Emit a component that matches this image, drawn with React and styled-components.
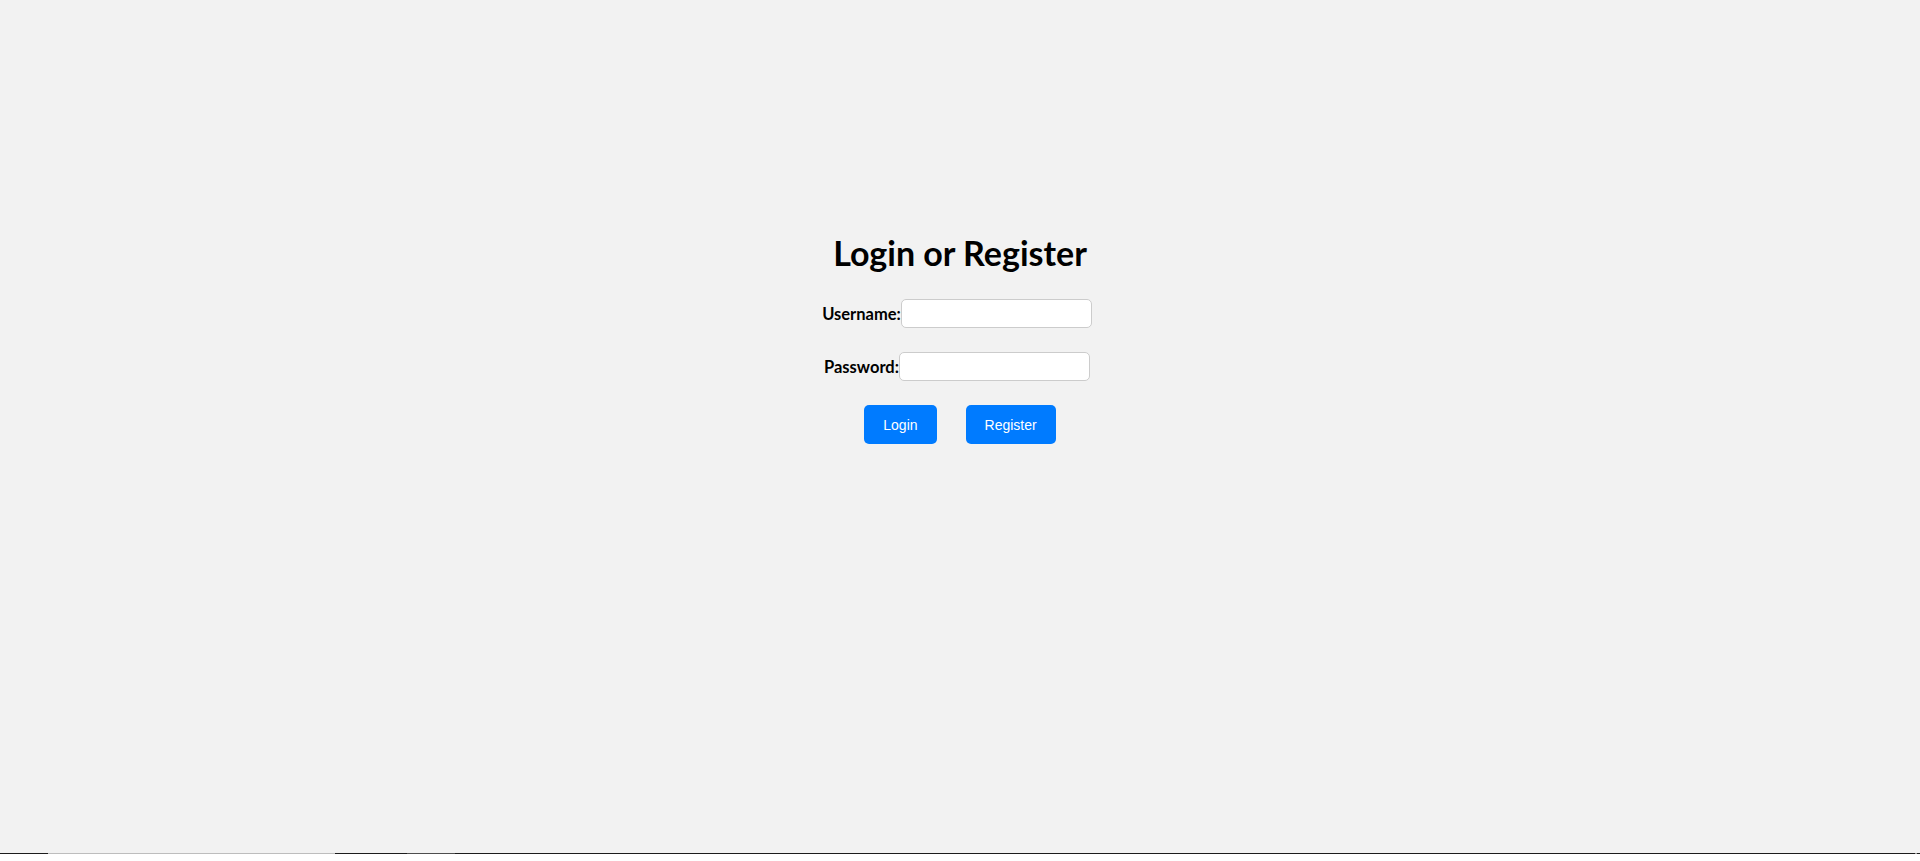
import React from "react"
import styled, { createGlobalStyle } from "styled-components"

const GlobalStyle = createGlobalStyle`
  html, body {
    margin: 0;
    padding: 0;
    background: #ffffff;
  }
  * {
    box-sizing: border-box;
  }
`

const Page = styled.div`
  display: flex;
  flex-direction: column;
  height: 100vh;
`

const Main = styled.main`
  flex: 1;
  background: #f2f2f2;
  padding-top: 233px;
`

const Card = styled.div`
  display: flex;
  flex-direction: column;
  align-items: center;
`

const Title = styled.h1`
  margin: 0 0 26px 0;
  font-family: Lato, "Open Sans", sans-serif;
  font-size: 34px;
  line-height: 40px;
  font-weight: 700;
  color: #000;
`

const Row = styled.div`
  display: flex;
  align-items: center;
  justify-content: center;
  margin-bottom: 24px;
`

const Label = styled.label`
  font-family: Lato, "Open Sans", sans-serif;
  font-size: 16.5px;
  font-weight: 700;
  color: #000;
`

const Input = styled.input`
  width: 191px;
  height: 29px;
  padding: 4px 8px;
  margin-right: 6px;
  border: 1px solid #cccccc;
  border-radius: 5px;
  background: #fff;
  font-family: "Liberation Sans", Arial, sans-serif;
  font-size: 13px;
  outline: none;
`

const Buttons = styled.div`
  display: flex;
  gap: 29px;
`

const Button = styled.button`
  height: 39px;
  padding: 0 19px;
  border: none;
  border-radius: 5px;
  background: #007bff;
  color: #fff;
  font-family: "Liberation Sans", Arial, sans-serif;
  font-size: 14px;
  cursor: pointer;
`

const Strip = styled.div`
  display: flex;
  height: 1px;
`

const Segment = styled.span`
  display: block;
  height: 1px;
  width: ${props => (props.w ? `${props.w}px` : "auto")};
  flex: ${props => (props.w ? "0 0 auto" : "1")};
  background: ${props => props.color};
`

const Bottom = styled.div`
  height: 7px;
  background: #ffffff;
`

const segments = [
  { w: 48, color: "#1c1c1c" },
  { w: 287, color: "#bdbdbd" },
  { w: 72, color: "#1c1c1c" },
  { w: 48, color: "#4d4d4d" },
  { color: "#1c1c1c" },
  { w: 2, color: "#9a9a9a" },
  { w: 3, color: "#1c1c1c" },
]

const App = () => {
  return (
    <Page>
      <GlobalStyle />
      <Main>
        <Card>
          <Title>Login or Register</Title>
          <Row>
            <Label htmlFor="username">Username:</Label>
            <Input id="username" type="text" />
          </Row>
          <Row>
            <Label htmlFor="password">Password:</Label>
            <Input id="password" type="password" />
          </Row>
          <Buttons>
            <Button>Login</Button>
            <Button>Register</Button>
          </Buttons>
        </Card>
      </Main>
      <Strip>
        {segments.map((s, i) => (
          <Segment key={i} w={s.w} color={s.color} />
        ))}
      </Strip>
      <Bottom />
    </Page>
  )
}

export default App
